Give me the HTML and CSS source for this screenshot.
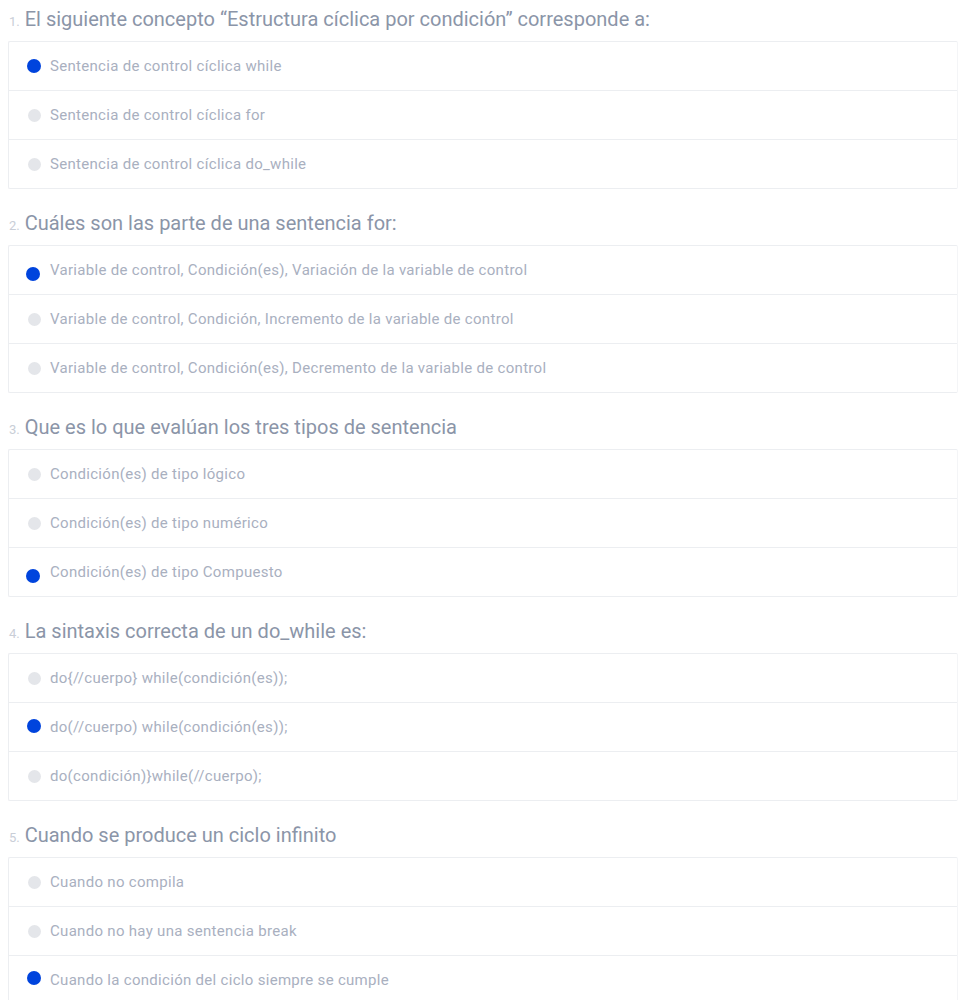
FILE: index.html
```html
<!DOCTYPE html>
<html lang="es">
<head>
<meta charset="utf-8">
<title>Cuestionario</title>
<link rel="stylesheet" href="styles.css">
</head>
<body>
<main class="quiz">
  <section class="question">
    <h2 class="q-title"><span class="q-num">1.</span> El siguiente concepto “Estructura cíclica por condición” corresponde a:</h2>
    <ul class="options">
      <li class="option"><span class="dot dot-on"></span><span class="label">Sentencia de control cíclica while</span></li>
      <li class="option"><span class="dot"></span><span class="label">Sentencia de control cíclica for</span></li>
      <li class="option"><span class="dot"></span><span class="label">Sentencia de control cíclica do_while</span></li>
    </ul>
  </section>
  <section class="question">
    <h2 class="q-title"><span class="q-num">2.</span> Cuáles son las parte de una sentencia for:</h2>
    <ul class="options">
      <li class="option"><span class="dot dot-on dot-low"></span><span class="label">Variable de control, Condición(es), Variación de la variable de control</span></li>
      <li class="option"><span class="dot"></span><span class="label">Variable de control, Condición, Incremento de la variable de control</span></li>
      <li class="option"><span class="dot"></span><span class="label">Variable de control, Condición(es), Decremento de la variable de control</span></li>
    </ul>
  </section>
  <section class="question">
    <h2 class="q-title"><span class="q-num">3.</span> Que es lo que evalúan los tres tipos de sentencia</h2>
    <ul class="options">
      <li class="option"><span class="dot"></span><span class="label">Condición(es) de tipo lógico</span></li>
      <li class="option"><span class="dot"></span><span class="label">Condición(es) de tipo numérico</span></li>
      <li class="option"><span class="dot dot-on dot-low"></span><span class="label">Condición(es) de tipo Compuesto</span></li>
    </ul>
  </section>
  <section class="question">
    <h2 class="q-title"><span class="q-num">4.</span> La sintaxis correcta de un do_while es:</h2>
    <ul class="options">
      <li class="option"><span class="dot"></span><span class="label">do{//cuerpo} while(condición(es));</span></li>
      <li class="option"><span class="dot dot-on dot-mid"></span><span class="label">do(//cuerpo) while(condición(es));</span></li>
      <li class="option"><span class="dot"></span><span class="label">do(condición)}while(//cuerpo);</span></li>
    </ul>
  </section>
  <section class="question">
    <h2 class="q-title"><span class="q-num">5.</span> Cuando se produce un ciclo infinito</h2>
    <ul class="options">
      <li class="option"><span class="dot"></span><span class="label">Cuando no compila</span></li>
      <li class="option"><span class="dot"></span><span class="label">Cuando no hay una sentencia break</span></li>
      <li class="option"><span class="dot dot-on dot-high"></span><span class="label">Cuando la condición del ciclo siempre se cumple</span></li>
    </ul>
  </section>
</main>
</body>
</html>
```

FILE: styles.css
```css
html, body {
  margin: 0;
  padding: 0;
  background: #ffffff;
}

body {
  font-family: Roboto, "Liberation Sans", Arial, sans-serif;
  overflow: hidden;
}

.quiz {
  display: flex;
  flex-direction: column;
  gap: 15px;
  padding: 0 0 0 8px;
}

.question {
  display: flex;
  flex-direction: column;
}

.q-title {
  margin: 0;
  padding: 7px 0 10px 1px;
  font-size: 20px;
  line-height: 24px;
  font-weight: 400;
  color: #8b95a8;
  white-space: nowrap;
}

.q-num {
  font-size: 13px;
  line-height: 0;
  color: #c9ced7;
}

.options {
  list-style: none;
  margin: 0;
  padding: 0;
  border: 1px solid #eceef1;
  border-right-color: #f4f5f7;
  border-radius: 2px;
}

.option {
  display: flex;
  align-items: center;
  gap: 9px;
  height: 48px;
  padding-left: 19px;
  border-top: 1px solid #eceef1;
}

.option:first-child {
  border-top: none;
}

.dot {
  flex: none;
  width: 13px;
  height: 13px;
  border-radius: 50%;
  background: #e4e6ea;
}

.dot-on {
  background: #0044dd;
  width: 14px;
  height: 14px;
  margin-left: -1px;
}

.dot-low {
  transform: translate(-1px, 4px);
}

.dot-mid {
  transform: translateY(-1px);
}

.dot-high {
  transform: translateY(-2px);
}

.label {
  font-size: 15px;
  letter-spacing: 0.3px;
  color: #a9b0bf;
  white-space: nowrap;
}
```
